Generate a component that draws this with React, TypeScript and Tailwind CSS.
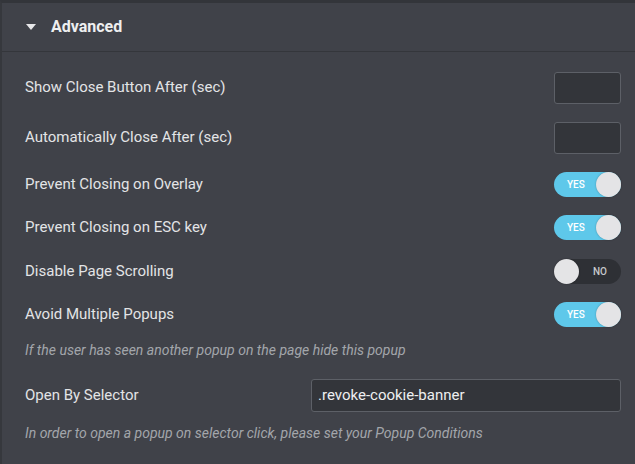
import React from 'react';

function Toggle({ on }: { on: boolean }) {
  if (on) {
    return (
      <div className="flex h-[25px] w-[67px] items-center justify-between rounded-full bg-[#5ec8ea] pl-[13px]">
        <span className="text-[10px] font-medium text-white">YES</span>
        <span className="h-[25px] w-[25px] rounded-full bg-[#e4e4e6] shadow-[0_0_2px_rgba(0,0,0,0.3)]" />
      </div>
    );
  }
  return (
    <div className="flex h-[25px] w-[67px] items-center justify-between rounded-full bg-[#2e3035] pr-[14px]">
      <span className="h-[25px] w-[25px] rounded-full bg-[#e4e4e6] shadow-[0_0_2px_rgba(0,0,0,0.3)]" />
      <span className="text-[10px] font-medium text-[#c7c9cc]">NO</span>
    </div>
  );
}

function Row({ label, children, h }: { label: string; children: React.ReactNode; h: string }) {
  return (
    <div className={`flex items-center justify-between ${h}`}>
      <span className="text-[15px] text-[#e3e4e6]">{label}</span>
      {children}
    </div>
  );
}

export default function App() {
  return (
    <div
      className="h-[464px] w-[635px] overflow-hidden border-t-[3px] border-l-2 border-t-[#33353a] border-l-[#36383d] bg-[#404249]"
      style={{ fontFamily: 'Roboto, "Liberation Sans", sans-serif' }}
    >
      <div className="flex h-[49px] items-center border-b border-[#34363b] pl-[24px]">
        <svg width="10" height="6" viewBox="0 0 10 6" className="mr-[15px]">
          <path d="M0 0h10L5 6z" fill="#e8e8ea" />
        </svg>
        <span className="text-[16px] font-bold text-[#eeeff0]">Advanced</span>
      </div>
      <div className="pr-[14px] pl-[23px] pt-[19px]">
        <Row label="Show Close Button After (sec)" h="h-[33px]">
          <div className="h-[32px] w-[67px] rounded-[3px] border border-[#5d6067] bg-[#33353a]" />
        </Row>
        <Row label="Automatically Close After (sec)" h="h-[33px] mt-[17px]">
          <div className="h-[32px] w-[67px] rounded-[3px] border border-[#5d6067] bg-[#33353a]" />
        </Row>
        <Row label="Prevent Closing on Overlay" h="h-[25px] mt-[18px]">
          <Toggle on />
        </Row>
        <Row label="Prevent Closing on ESC key" h="h-[25px] mt-[18px]">
          <Toggle on />
        </Row>
        <Row label="Disable Page Scrolling" h="h-[25px] mt-[19px]">
          <Toggle on={false} />
        </Row>
        <Row label="Avoid Multiple Popups" h="h-[25px] mt-[18px]">
          <Toggle on />
        </Row>
        <p className="mt-[14px] text-[14px] leading-[18px] italic text-[#a3a6ab]">
          If the user has seen another popup on the page hide this popup
        </p>
        <div className="mt-[20px] flex h-[33px] items-center">
          <span className="w-[286px] text-[15px] text-[#e3e4e6]">Open By Selector</span>
          <div className="flex h-[33px] flex-1 items-center rounded-[3px] border border-[#5d6067] bg-[#33353a] px-[6px] text-[15px] text-[#eeeff0]">
            .revoke-cookie-banner
          </div>
        </div>
        <p className="mt-[12px] text-[14px] leading-[18px] italic text-[#a3a6ab]">
          In order to open a popup on selector click, please set your Popup Conditions
        </p>
      </div>
    </div>
  );
}
